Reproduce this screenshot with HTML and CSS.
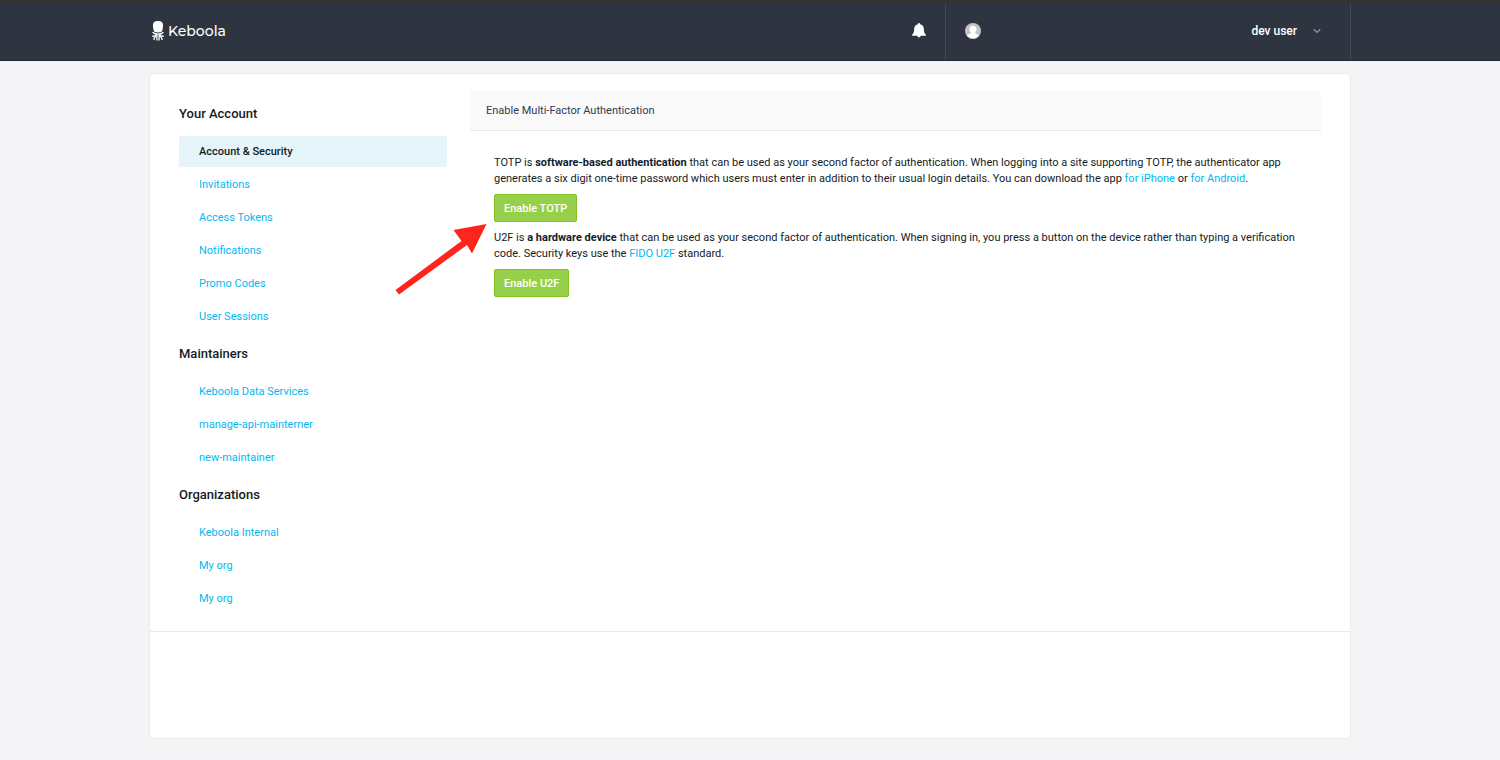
FILE: index.html
```html
<!DOCTYPE html>
<html lang="en">
<head>
    <meta charset="utf-8">
    <title>Keboola - Account &amp; Security</title>
    <meta name="viewport" content="width=device-width, initial-scale=1.0">
    <link rel="stylesheet" href="styles.css">
</head>
<body>
<header class="topbar">
    <div class="topbar-inner">
        <a class="logo" href="#">
            <svg width="12" height="20" viewBox="0 0 12 20" fill="#fff" aria-hidden="true">
                <path d="M6 0C2.600 0 .9 1.600.9 4.200c0 1.800.4 3.600.8 5.100.3 1.500 1.300 2.200 4.300 2.200s4-.7 4.300-2.200c.4-1.500.8-3.300.8-5.100C11.100 1.600 9.400 0 6 0z"/>
                <path d="M1 11.500c1.500 1.600 3 1.700 5 1.700s3.500-.1 5-1.700M.6 15.200c1.800.3 3-.8 4-1.800M11.400 15.200c-1.800.3-3-.8-4-1.800M2 18.400c.2-2 1.500-3 2.700-4.600M10 18.400c-.2-2-1.500-3-2.700-4.600M4.900 19v-5M7.100 19v-5" fill="none" stroke="#fff" stroke-width="1.300" stroke-linecap="round"/>
            </svg>
            <span>Keboola</span>
        </a>
        <button class="bell" type="button" aria-label="Notifications">
            <svg width="14" height="16" viewBox="0 0 14 16" fill="#fff" aria-hidden="true">
                <path d="M7 0c.6 0 1 .4 1 1v.3c2.300.4 3.700 2 3.800 4.500.1 2.900.7 4.800 2.100 6v1H.1v-1c1.400-1.200 2-3.100 2.100-6C2.300 3.300 3.700 1.700 6 1.300V1c0-.6.4-1 1-1zM5.200 12.600h3.600c-.1 1.100-.8 1.800-1.800 1.800s-1.700-.7-1.800-1.800z"/>
            </svg>
        </button>
        <button class="user" type="button">
            <svg class="avatar" width="16" height="16" viewBox="0 0 16 16" aria-hidden="true">
                <circle cx="8" cy="8" r="8" fill="#c4c4c4"/>
                <path d="M8 2.800c2.200 0 3.500 1.400 3.500 3.500 0 1.400-.6 2.400-1.400 3.100.1 1 .6 1.300 2.200 1.900.8.300 1.300.7 1.600 1.200A7.500 7.500 0 0 1 8 15.500a7.500 7.500 0 0 1-5.900-3c.3-.5.8-.9 1.600-1.200 1.600-.6 2.100-.9 2.200-1.900-.8-.7-1.400-1.700-1.400-3.100C4.500 4.200 5.800 2.800 8 2.800z" fill="#fff"/>
            </svg>
            <span class="user-name">dev user</span>
            <svg width="8" height="6" viewBox="0 0 8 6" fill="none" stroke="#8b95a3" stroke-width="1.300" aria-hidden="true">
                <path d="M.8 1.200L4 4.400l3.200-3.200"/>
            </svg>
        </button>
    </div>
</header>

<div class="card">
    <div class="columns">
        <nav class="sidebar">
            <h2>Your Account</h2>
            <ul>
                <li><a class="active" href="#">Account &amp; Security</a></li>
                <li><a href="#">Invitations</a></li>
                <li><a href="#">Access Tokens</a></li>
                <li><a href="#">Notifications</a></li>
                <li><a href="#">Promo Codes</a></li>
                <li><a href="#">User Sessions</a></li>
            </ul>
            <h2>Maintainers</h2>
            <ul>
                <li><a href="#">Keboola Data Services</a></li>
                <li><a href="#">manage-api-mainterner</a></li>
                <li><a href="#">new-maintainer</a></li>
            </ul>
            <h2>Organizations</h2>
            <ul>
                <li><a href="#">Keboola Internal</a></li>
                <li><a href="#">My org</a></li>
                <li><a href="#">My org</a></li>
            </ul>
        </nav>
        <main class="panel">
            <h1>Enable Multi-Factor Authentication</h1>
            <div class="panel-body">
                <p>TOTP is <strong>software-based authentication</strong> that can be used as your second factor of authentication. When logging into a site supporting TOTP, the authenticator app generates a six digit one-time password which users must enter in addition to their usual login details. You can download the app <a href="#">for iPhone</a> or <a href="#">for Android</a>.</p>
                <div class="action">
                    <button class="btn" type="button">Enable TOTP</button>
                    <svg class="arrow" width="92" height="72" viewBox="0 0 92 72" fill="#ff251d" aria-hidden="true">
                        <path d="M91.500 1L77 30.500l-5-8.500L4 71.500.5 67 66.500 18 58.500 7z"/>
                    </svg>
                </div>
                <p>U2F is <strong>a hardware device</strong> that can be used as your second factor of authentication. When signing in, you press a button on the device rather than typing a verification code. Security keys use the <a href="#">FIDO U2F</a> standard.</p>
                <div class="action">
                    <button class="btn" type="button">Enable U2F</button>
                </div>
            </div>
        </main>
    </div>
    <div class="card-footer"></div>
</div>
</body>
</html>
```
FILE: styles.css
```css
* { box-sizing: border-box; }
body { margin: 0; background: #f4f4f6; color: #151b26; font: 11px/16px Roboto, Arial, sans-serif; }
a { color: #00b9f2; text-decoration: none; }
button { font-family: inherit; cursor: pointer; }

.topbar { background: #2e3541; border-top: 3px solid #333; border-bottom: 1px solid #1c2938; }
.topbar-inner { display: grid; grid-template-columns: 1fr 54px 405px; width: calc(80% + 2px); height: 57px; margin: 0 auto; }
.topbar button { background: none; border: 0; border-right: 1px solid #3f4854; padding: 0 0 2px; }
.logo { display: flex; align-items: center; gap: 4px; padding: 0 0 2px 3px; color: #fff; font: 500 14px/20px Montserrat, Lato, sans-serif; }
.bell { display: flex; align-items: center; justify-content: center; }
.user { display: flex; align-items: center; color: #fff; font-size: 12px; font-weight: 500; }
.user .avatar { margin-left: 19px; }
.user-name { margin-left: auto; margin-right: 16px; }
.user svg:last-child { margin-right: 29px; }

.card { width: calc(80% + 2px); margin: 12px auto 22px; background: #fff; border: 1px solid #eaeaec; border-radius: 4px; }
.columns { display: flex; gap: 23px; padding: 17px 29px; }
.card-footer { height: 107px; border-top: 1px solid #eaeaec; }

.sidebar { flex: 0 0 268px; padding-top: 1px; }
.sidebar h2 { margin: 0; font-size: 13px; font-weight: 500; line-height: 44px; }
.sidebar ul { display: grid; gap: 2px; margin: 0; padding: 0; list-style: none; }
.sidebar a { display: block; padding: 0 20px; border-radius: 2px; line-height: 31px; }
.sidebar .active { background: #e4f4f8; color: #151b26; font-weight: 500; }

.panel { flex: 1; }
.panel h1 { margin: 0; padding: 0 16px; background: #fafafa; border-bottom: 1px solid #eaeaec; color: #2e3b54; font-size: 11px; font-weight: 400; line-height: 39px; }
.panel-body { padding: 24px; }
.panel p { margin: 0 0 7px; }
.panel strong { font-weight: 700; }
.action { position: relative; margin-bottom: 8px; }
.btn { display: block; height: 28px; padding: 0 9px; background: #96d04a; border: 1px solid #84c31f; border-radius: 2px; color: #fff; font-size: 11px; font-weight: 500; }

/* pointer lying over the page, aimed at the TOTP button */
.arrow { position: absolute; top: 29px; left: -99px; }
```
